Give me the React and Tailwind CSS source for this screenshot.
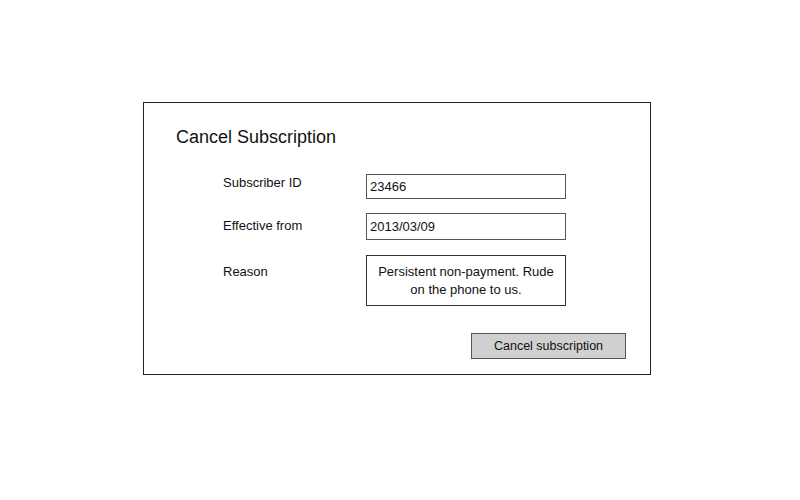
import React from 'react';

const font = { fontFamily: '"Liberation Sans", "DejaVu Sans", sans-serif' };

const Field = ({ label, children, className = '', labelClass = 'pt-[2px]' }) => (
  <div className={`flex items-start ${className}`}>
    <div className={`w-[143px] text-[13px] text-[#111] ${labelClass}`}>{label}</div>
    {children}
  </div>
);

export default function App() {
  return (
    <div className="w-[800px] h-[500px] bg-white" style={font}>
      <div className="pt-[102px] pl-[143px]">
        <div className="w-[508px] h-[273px] border-[1.5px] border-[#222] pl-[32px] pt-[22px]">
          <h1 className="text-[18px] leading-[24px] text-[#111]">Cancel Subscription</h1>
          <div className="pl-[47px] mt-[24px] flex flex-col">
            <Field label="Subscriber ID" labelClass="pt-0">
              <div className="w-[200px] h-[25px] border-[1.5px] border-[#555] flex items-center px-[3px] text-[13px] text-[#111] mt-[1px]">
                23466
              </div>
            </Field>
            <Field label="Effective from" className="mt-[16px]" labelClass="pt-[1px]">
              <div className="w-[200px] h-[27px] border-[1.5px] border-[#555] flex items-center px-[3px] text-[13px] text-[#111] -mt-[2px]">
                2013/03/09
              </div>
            </Field>
            <Field label="Reason" className="mt-[17px]" labelClass="pt-[5px]">
              <div className="w-[200px] h-[51px] border-[1.5px] border-[#333] px-[10px] pt-[7px] text-center text-[13px] leading-[18px] text-[#111] -mt-[2px]">
                Persistent non-payment. Rude on the phone to us.
              </div>
            </Field>
          </div>
          <div className="flex justify-end pr-[24px] mt-[27px]">
            <button className="w-[155px] h-[26px] bg-[#d0d0d0] border-[1.5px] border-[#555] text-[12.5px] text-[#111]">
              Cancel subscription
            </button>
          </div>
        </div>
      </div>
    </div>
  );
}
